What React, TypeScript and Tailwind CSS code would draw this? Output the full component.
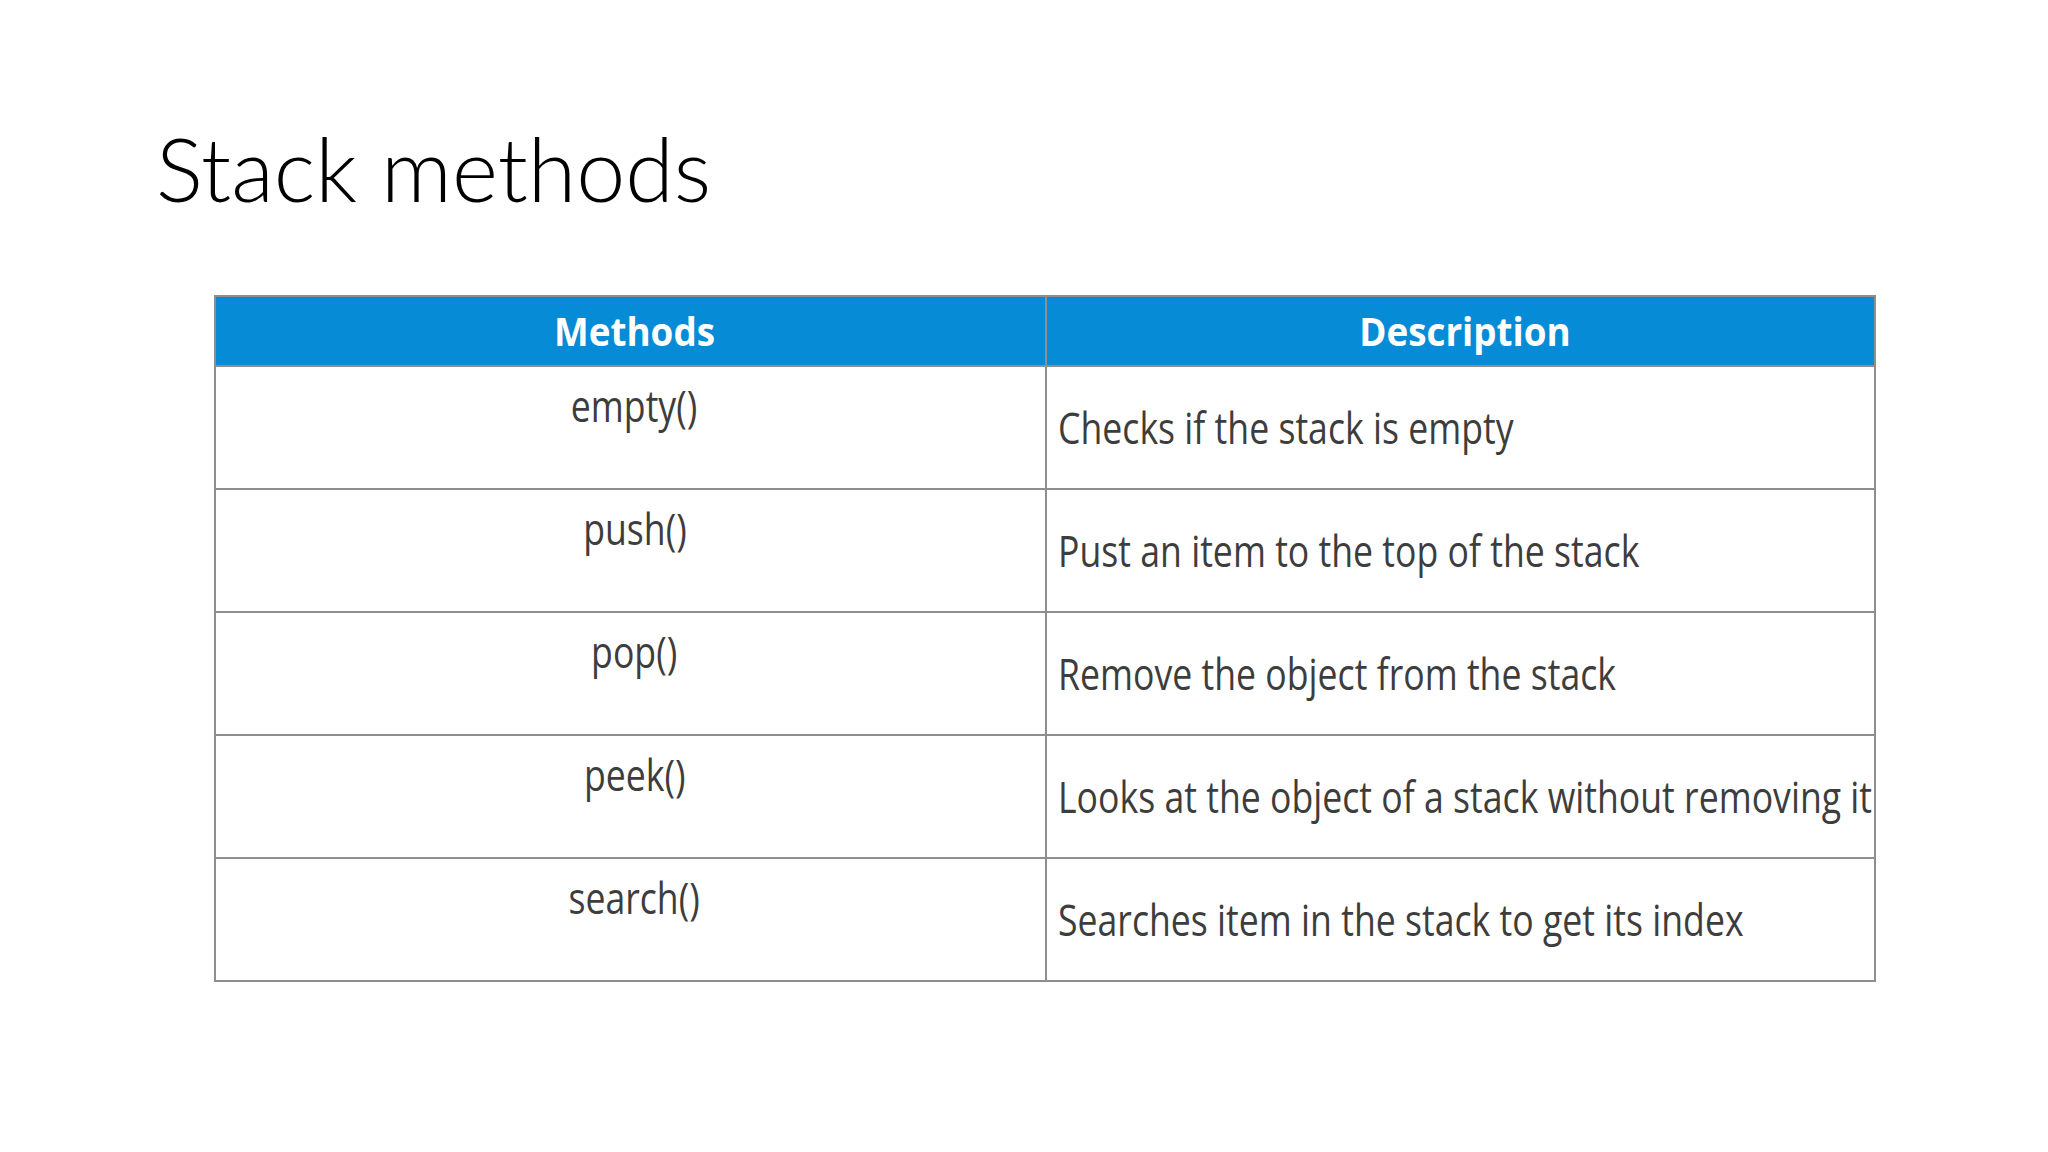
const rows = [
  { method: 'empty()', desc: 'Checks if the stack is empty' },
  { method: 'push()', desc: 'Pust an item to the top of the stack' },
  { method: 'pop()', desc: 'Remove the object from the stack' },
  { method: 'peek()', desc: 'Looks at the object of a stack without removing it' },
  { method: 'search()', desc: 'Searches item in the stack to get its index' },
]

export default function App() {
  return (
    <div className="h-[1152px] w-[2048px] overflow-hidden bg-white">
      <h1 className="pl-[156px] pt-[116px] font-['Lato',sans-serif] text-[88px] font-light leading-[1.2] text-black">
        Stack methods
      </h1>
      <div className="ml-[214px] mt-[73px]">
        {/* the table in the slide is a horizontally squashed image, hence the scale-x */}
        <table className="w-[1662px] table-fixed border-collapse border-2 border-[#8e8e8e] font-['Open_Sans',sans-serif]">
          <thead>
            <tr className="h-[70px] bg-[#068bd6]">
              <th className="w-[831px] border-2 border-[#8e8e8e] pl-[8px] text-center text-[40px] font-bold text-white">
                <span className="inline-block origin-center scale-x-[0.92]">Methods</span>
              </th>
              <th className="border-2 border-[#8e8e8e] pl-[8px] text-center text-[40px] font-bold text-white">
                <span className="inline-block origin-center scale-x-[0.92]">Description</span>
              </th>
            </tr>
          </thead>
          <tbody>
            {rows.map((r) => (
              <tr key={r.method} className="h-[123px]">
                <td className="border-2 border-[#8e8e8e] pl-[8px] pt-[10px] text-center align-top text-[44px] leading-[1.3] text-[#3d3d3d]">
                  <span className="inline-block origin-center scale-x-[0.81]">{r.method}</span>
                </td>
                <td className="whitespace-nowrap border-2 border-[#8e8e8e] pl-[11px] align-middle text-[44px] leading-[1.3] text-[#3d3d3d]">
                  <span className="inline-block origin-left scale-x-[0.81]">{r.desc}</span>
                </td>
              </tr>
            ))}
          </tbody>
        </table>
      </div>
    </div>
  )
}
